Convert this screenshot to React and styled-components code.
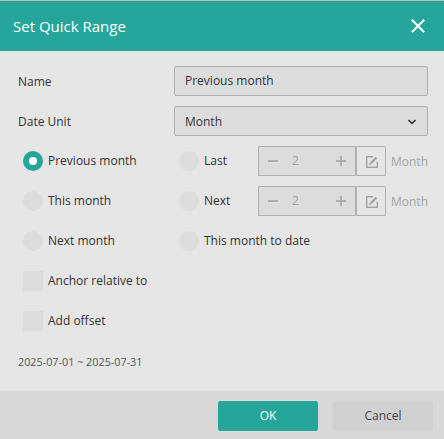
import React, { useState } from 'react';
import styled, { createGlobalStyle } from 'styled-components';

const GlobalStyle = createGlobalStyle`
    * {
        box-sizing: border-box;
    }

    body {
        margin: 0;
        background: #e5e5e5;
        color: #333;
        font-family: "Open Sans", "Noto Sans", sans-serif;
        font-size: 12px;
    }
`

const Dialog = styled.div`
    display: flex;
    flex-direction: column;
    width: 444px;
    height: 439px;
    border-top: 1px solid #bdbdbd;
    background: #e5e5e5;
    overflow: hidden;
`

const Header = styled.header`
    display: flex;
    align-items: center;
    justify-content: space-between;
    height: 50px;
    padding: 0 19px 0 13px;
    background: #26a69a;
    color: #fff;
`

const Title = styled.h1`
    margin: 0;
    font-size: 15px;
    font-weight: 400;
    line-height: 22px;
`

const IconButton = styled.button`
    display: flex;
    padding: 0;
    border: 0;
    background: none;
    color: inherit;
`

const Body = styled.main`
    flex: 1;
    padding: 10px 16px 0 18px;
`

const FormRow = styled.div`
    display: grid;
    grid-template-columns: 156px 254px;
    align-items: center;
    height: 40px;
`

const OptionRow = styled.div`
    display: grid;
    grid-template-columns: 156px 79px 1fr;
    align-items: center;
    height: 40px;
    padding-left: 5px;
`

const FieldLabel = styled.label`
    line-height: 18px;
    padding-top: 2px;
`

const TextInput = styled.input`
    width: 254px;
    height: 30px;
    padding: 0 10px 1px;
    border: 1px solid #b0b0b0;
    border-radius: 2px;
    background: #dcdcdc;
    color: #333;
    font: inherit;
    outline: none;
`

const SelectBox = styled.div`
    display: flex;
    align-items: center;
    justify-content: space-between;
    height: 30px;
    padding: 1px 10px 0;
    border: 1px solid #b0b0b0;
    border-radius: 2px;
    background: #dcdcdc;
`

const Option = styled.label`
    display: flex;
    align-items: center;
    gap: 5px;
    line-height: 16px;
    white-space: nowrap;
    ${props => props.$wide && 'grid-column: span 2;'}
`

const RadioMark = styled.span`
    display: flex;
    align-items: center;
    justify-content: center;
    width: 20px;
    height: 20px;
    border-radius: 50%;
    background: ${props => props.$checked ? '#26a69a' : '#dcdcdc'};

    &::after {
        content: "";
        width: 8px;
        height: 8px;
        border-radius: 50%;
        background: ${props => props.$checked ? '#fff' : 'transparent'};
    }
`

const CheckMark = styled.span`
    width: 20px;
    height: 20px;
    border-radius: 1px;
    background: #dcdcdc;
`

const StepperGroup = styled.div`
    display: flex;
    align-items: center;
    color: #a3a3a3;
`

const Stepper = styled.div`
    display: grid;
    grid-template-columns: 28px 1fr 28px;
    align-items: center;
    justify-items: center;
    width: 98px;
    height: 30px;
    border: 1px solid #b0b0b0;
    background: #dcdcdc;
`

const StepValue = styled.span`
    justify-self: start;
    padding-left: 5px;
    line-height: 18px;
`

const EditButton = styled.button`
    display: flex;
    align-items: center;
    justify-content: center;
    width: 30px;
    height: 30px;
    padding: 2px 0 0 1px;
    border: 1px solid #b0b0b0;
    border-radius: 1px;
    background: transparent;
    color: #a3a3a3;
`

const Unit = styled.span`
    padding: 1px 0 0 5px;
    line-height: 16px;
`

const RangeText = styled.div`
    padding-top: 12px;
    color: #555;
    font-size: 10.8px;
    line-height: 18px;
`

const Footer = styled.footer`
    display: flex;
    justify-content: flex-end;
    gap: 15px;
    height: 48px;
    padding: 10px 11px 0 0;
    background: #d8d8d8;
`

const ActionButton = styled.button`
    width: 100px;
    height: 30px;
    padding: 0 0 2px;
    border: 0;
    border-radius: 2px;
    background: ${props => props.$primary ? '#26a69a' : '#d0d0d0'};
    color: ${props => props.$primary ? '#fff' : '#444'};
    font: inherit;
    font-weight: ${props => props.$primary ? 500 : 400};
`

const CloseIcon = () => (
    <svg width="14" height="14" viewBox="0 0 14 14" fill="none" stroke="currentColor" strokeWidth="2">
        <path d="M0.8 0.8 13.2 13.2M13.2 0.8 0.8 13.2" />
    </svg>
)

const ChevronIcon = () => (
    <svg width="10" height="6" viewBox="0 0 10 6" fill="none" stroke="#333" strokeWidth="1.6">
        <path d="M1.5 1 5 4.4 8.5 1" />
    </svg>
)

const MinusIcon = () => (
    <svg width="10" height="10" viewBox="0 0 10 10" fill="none" stroke="#acacac" strokeWidth="2">
        <path d="M0 5H10" />
    </svg>
)

const PlusIcon = () => (
    <svg width="10" height="10" viewBox="0 0 10 10" fill="none" stroke="#acacac" strokeWidth="2">
        <path d="M0 5H10M5 0V10" />
    </svg>
)

const EditIcon = () => (
    <svg width="12" height="12" viewBox="0 0 12 12" fill="none" stroke="currentColor">
        <path d="M7 .7H.7V11.3H11.3V6" strokeWidth="1.4" />
        <path d="M4.6 7.5 10.4 1.6" strokeWidth="2.4" />
        <path d="M3 9 3.7 6.7 5.4 8.4Z" fill="currentColor" stroke="none" />
    </svg>
)

const Radio = ({ label, value, onChange, wide }) => (
    <Option $wide={wide} onClick={() => onChange(label)}>
        <RadioMark $checked={value === label} />
        {label}
    </Option>
)

const Amount = ({ value, unit }) => (
    <StepperGroup>
        <Stepper>
            <MinusIcon />
            <StepValue>{value}</StepValue>
            <PlusIcon />
        </Stepper>
        <EditButton disabled><EditIcon /></EditButton>
        <Unit>{unit}</Unit>
    </StepperGroup>
)

const App = () => {
    const [name, setName] = useState('Previous month');
    const [range, setRange] = useState('Previous month');

    return (
        <>
            <GlobalStyle />
            <Dialog>
                <Header>
                    <Title>Set Quick Range</Title>
                    <IconButton aria-label="Close"><CloseIcon /></IconButton>
                </Header>
                <Body>
                    <FormRow>
                        <FieldLabel>Name</FieldLabel>
                        <TextInput value={name} onChange={e => setName(e.target.value)} />
                    </FormRow>
                    <FormRow>
                        <FieldLabel>Date Unit</FieldLabel>
                        <SelectBox>Month<ChevronIcon /></SelectBox>
                    </FormRow>
                    <OptionRow>
                        <Radio label="Previous month" value={range} onChange={setRange} />
                        <Radio label="Last" value={range} onChange={setRange} />
                        <Amount value={2} unit="Month" />
                    </OptionRow>
                    <OptionRow>
                        <Radio label="This month" value={range} onChange={setRange} />
                        <Radio label="Next" value={range} onChange={setRange} />
                        <Amount value={2} unit="Month" />
                    </OptionRow>
                    <OptionRow>
                        <Radio label="Next month" value={range} onChange={setRange} />
                        <Radio label="This month to date" value={range} onChange={setRange} wide />
                    </OptionRow>
                    <OptionRow>
                        <Option><CheckMark />Anchor relative to</Option>
                    </OptionRow>
                    <OptionRow>
                        <Option><CheckMark />Add offset</Option>
                    </OptionRow>
                    <RangeText>2025-07-01 ~ 2025-07-31</RangeText>
                </Body>
                <Footer>
                    <ActionButton $primary>OK</ActionButton>
                    <ActionButton>Cancel</ActionButton>
                </Footer>
            </Dialog>
        </>
    );
}

export default App;
